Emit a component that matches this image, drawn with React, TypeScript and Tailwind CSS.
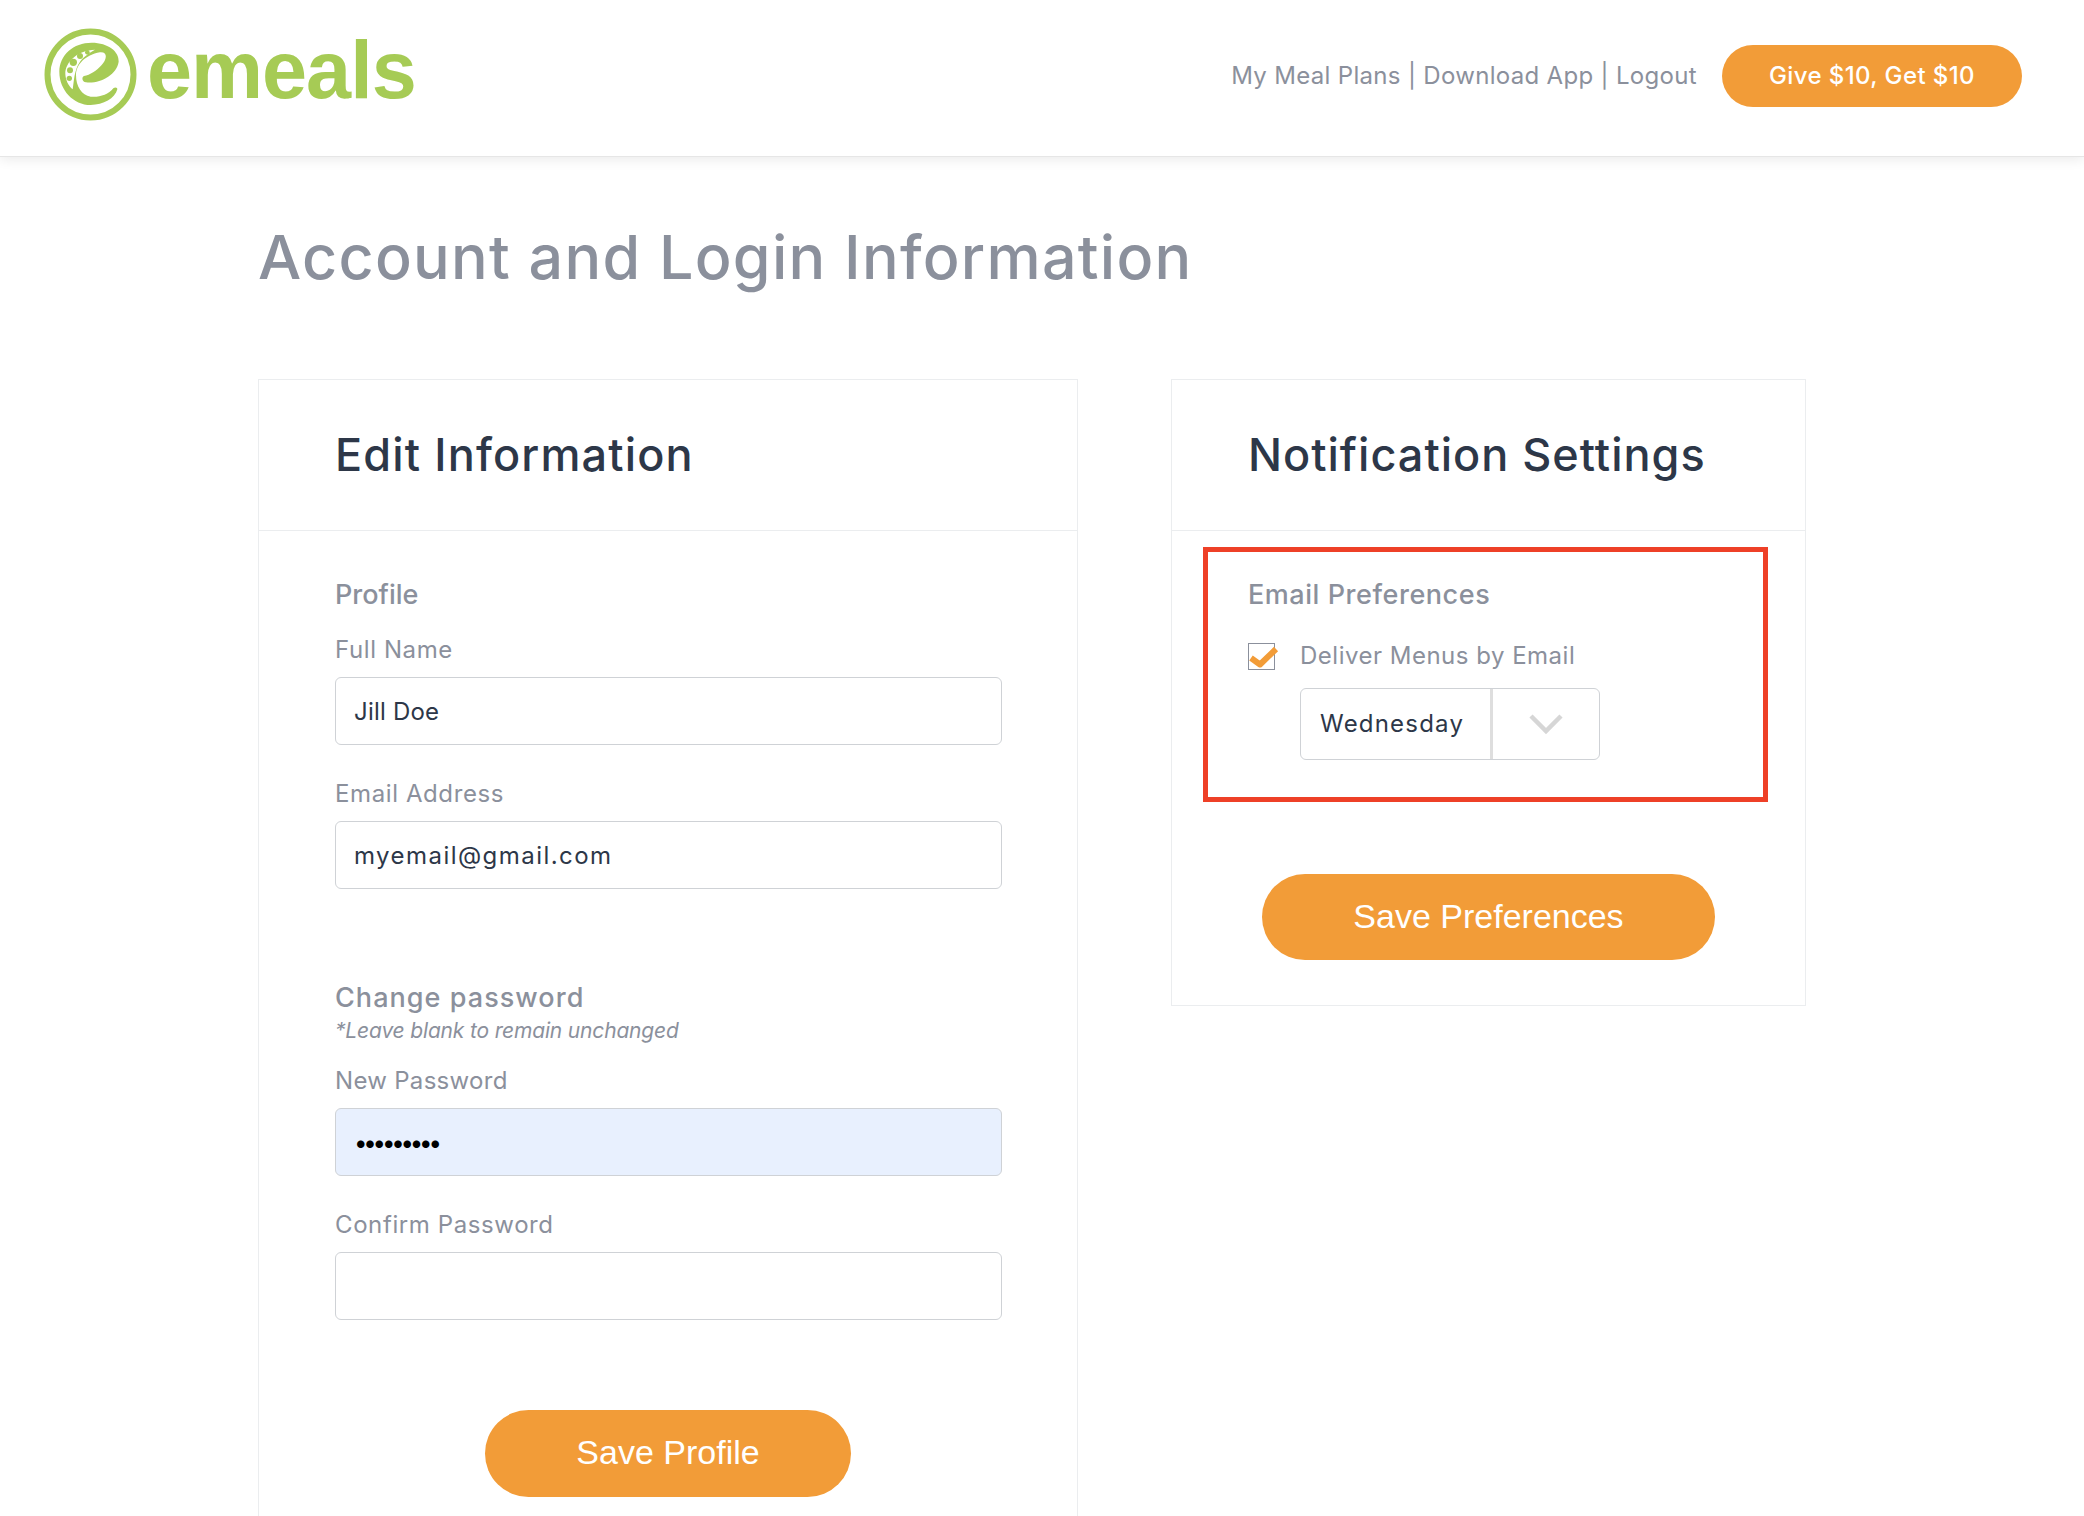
const FONT = "font-['Inter','Liberation_Sans',sans-serif]";

function Logo() {
  return (
    <div className="flex items-start">
      <svg width="93" height="93" viewBox="133 84 277 279" className="mt-[28px] ml-[44px]">
        <circle cx="271.5" cy="223.5" r="129" fill="none" stroke="#a6cb55" strokeWidth="18" />
        <path
          fill="#a6cb55"
          d="M275 128C220 128 178 165 178 215C178 270 220 315 272 315C310 315 345 295 352 268C353 262 345 260 340 265C325 285 295 293 272 290C245 285 228 260 228 225C228 195 255 165 300 157C325 155 320 180 305 195C290 212 270 225 252 228C245 230 245 245 258 247C300 252 350 225 356 185C358 155 325 128 275 128Z"
        />
        <path
          fill="#fff"
          d="M285 149C235 150 195 185 196 222C197 240 205 258 218 268C222 245 222 210 240 185C250 171 268 158 285 149Z"
        />
        <circle cx="262" cy="157" r="7" fill="#a6cb55" />
        <circle cx="240" cy="168" r="9" fill="#a6cb55" />
        <circle cx="220" cy="187" r="11" fill="#a6cb55" />
        <circle cx="210" cy="211" r="9" fill="#a6cb55" />
        <circle cx="208" cy="235" r="8" fill="#a6cb55" />
      </svg>
      <span className="mt-[20px] ml-[10px] font-['Liberation_Sans',sans-serif] text-[81px] leading-[100px] font-bold tracking-[-1px] text-[#a6cb55]">
        emeals
      </span>
    </div>
  );
}

type FieldProps = {
  label: string;
  labelClass?: string;
  value?: string;
  type?: string;
  className?: string;
};

function Field({ label, labelClass = "", value, type = "text", className = "" }: FieldProps) {
  return (
    <div>
      <label className={`block h-[36px] text-[24px] leading-[36px] text-[#8b909c] ${labelClass}`}>{label}</label>
      <input
        type={type}
        defaultValue={value}
        className={`mt-[9px] block h-[68px] w-[667px] rounded-[6px] border border-[#cfd2d6] px-[18px] text-[24px] text-[#2d3748] outline-none ${className}`}
      />
    </div>
  );
}

function OrangeButton({ children, className = "" }: { children: string; className?: string }) {
  return (
    <button className={`block rounded-full bg-[#f29c38] pb-[2px] font-['Liberation_Sans',sans-serif] text-[34px] text-white ${className}`}>
      {children}
    </button>
  );
}

export default function App() {
  return (
    <div className={`h-screen overflow-hidden bg-white ${FONT}`}>
      <header className="relative flex h-[157px] items-start justify-between border-b border-[#e6e6e6] bg-white shadow-[0_2px_12px_rgba(0,0,0,0.09)]">
        <Logo />
        <div className="mt-[45px] mr-[62px] flex items-center">
          <span className="text-[24px] tracking-[0.32px] text-[#8b909c]">My Meal Plans | Download App | Logout</span>
          <a className="ml-[25px] flex h-[62px] w-[300px] items-center justify-center rounded-full bg-[#f29c38] text-[24px] font-medium tracking-[0.4px] text-white">
            Give $10, Get $10
          </a>
        </div>
      </header>

      <main className="pl-[258px]">
        <h1 className="mt-[58px] h-[84px] text-[61px] leading-[84px] font-medium tracking-[1.27px] text-[#8b909c]">
          Account and Login Information
        </h1>

        <div className="mt-[80px] flex items-start gap-[93px]">
          <section className="w-[820px] border border-[#ebedef]">
            <div className="flex h-[151px] items-center border-b border-[#ebedef] pl-[76px]">
              <h2 className="text-[45px] font-medium tracking-[1.15px] text-[#2d3748]">Edit Information</h2>
            </div>
            <div className="pb-[80px] pl-[76px]">
              <h3 className="mt-[44px] h-[40px] text-[27px] leading-[40px] font-medium text-[#8b909c]">Profile</h3>
              <div className="mt-[17px]">
                <Field label="Full Name" labelClass="tracking-[0.6px]" value="Jill Doe" className="tracking-[0.2px]" />
              </div>
              <div className="mt-[31px]">
                <Field label="Email Address" labelClass="tracking-[0.6px]" value="myemail@gmail.com" className="tracking-[1.45px]" />
              </div>
              <h3 className="mt-[89px] h-[40px] text-[27px] leading-[40px] font-medium tracking-[1.05px] text-[#8b909c]">Change password</h3>
              <p className="-mt-[1px] h-[28px] text-[21px] leading-[28px] tracking-[-0.17px] text-[#8b909c] italic">*Leave blank to remain unchanged</p>
              <div className="mt-[18px]">
                <Field label="New Password" labelClass="tracking-[0.3px]" value="123456789" type="password" className="bg-[#e8f0fe] tracking-[-4.2px] text-black" />
              </div>
              <div className="mt-[31px]">
                <Field label="Confirm Password" labelClass="tracking-[0.6px]" />
              </div>
              <OrangeButton className="mt-[90px] ml-[150px] h-[87px] w-[366px]">Save Profile</OrangeButton>
            </div>
          </section>

          <section className="w-[635px] border border-[#ebedef]">
            <div className="flex h-[151px] items-center border-b border-[#ebedef] pl-[76px]">
              <h2 className="text-[45px] font-medium tracking-[1px] text-[#2d3748]">Notification Settings</h2>
            </div>
            <div className="mt-[16px] ml-[31px] h-[255px] w-[565px] border-[5px] border-[#ee4027] pt-[23px] pl-[40px]">
              <h3 className="h-[40px] text-[27px] leading-[40px] font-medium tracking-[0.55px] text-[#8b909c]">Email Preferences</h3>
              <div className="mt-[23px] flex h-[36px] items-center gap-[25px]">
                <div className="relative h-[27px] w-[27px] border border-[#8b909c]">
                  <svg width="34" height="28" viewBox="0 0 34 28" className="absolute -top-[1px] -left-[1px]">
                    <path d="M3 15L12 21.5L28 6" fill="none" stroke="#f29c38" strokeWidth="6" strokeLinejoin="round" />
                  </svg>
                </div>
                <span className="text-[24px] tracking-[0.5px] text-[#8b909c]">Deliver Menus by Email</span>
              </div>
              <div className="mt-[14px] ml-[52px] flex h-[72px] w-[300px] rounded-[6px] border border-[#cfd2d6]">
                <span className="flex w-[189px] items-center pl-[19px] text-[24px] tracking-[1.2px] text-[#2d3748]">Wednesday</span>
                <span className="flex flex-1 items-center justify-center border-l-[3px] border-[#dedede]">
                  <svg width="36" height="22" viewBox="0 0 36 22">
                    <path d="M3 3L18 18L33 3" fill="none" stroke="#d6d6d6" strokeWidth="4.5" />
                  </svg>
                </span>
              </div>
            </div>
            <div className="flex justify-center pt-[72px] pb-[45px]">
              <OrangeButton className="h-[86px] w-[453px]">Save Preferences</OrangeButton>
            </div>
          </section>
        </div>
      </main>
    </div>
  );
}
